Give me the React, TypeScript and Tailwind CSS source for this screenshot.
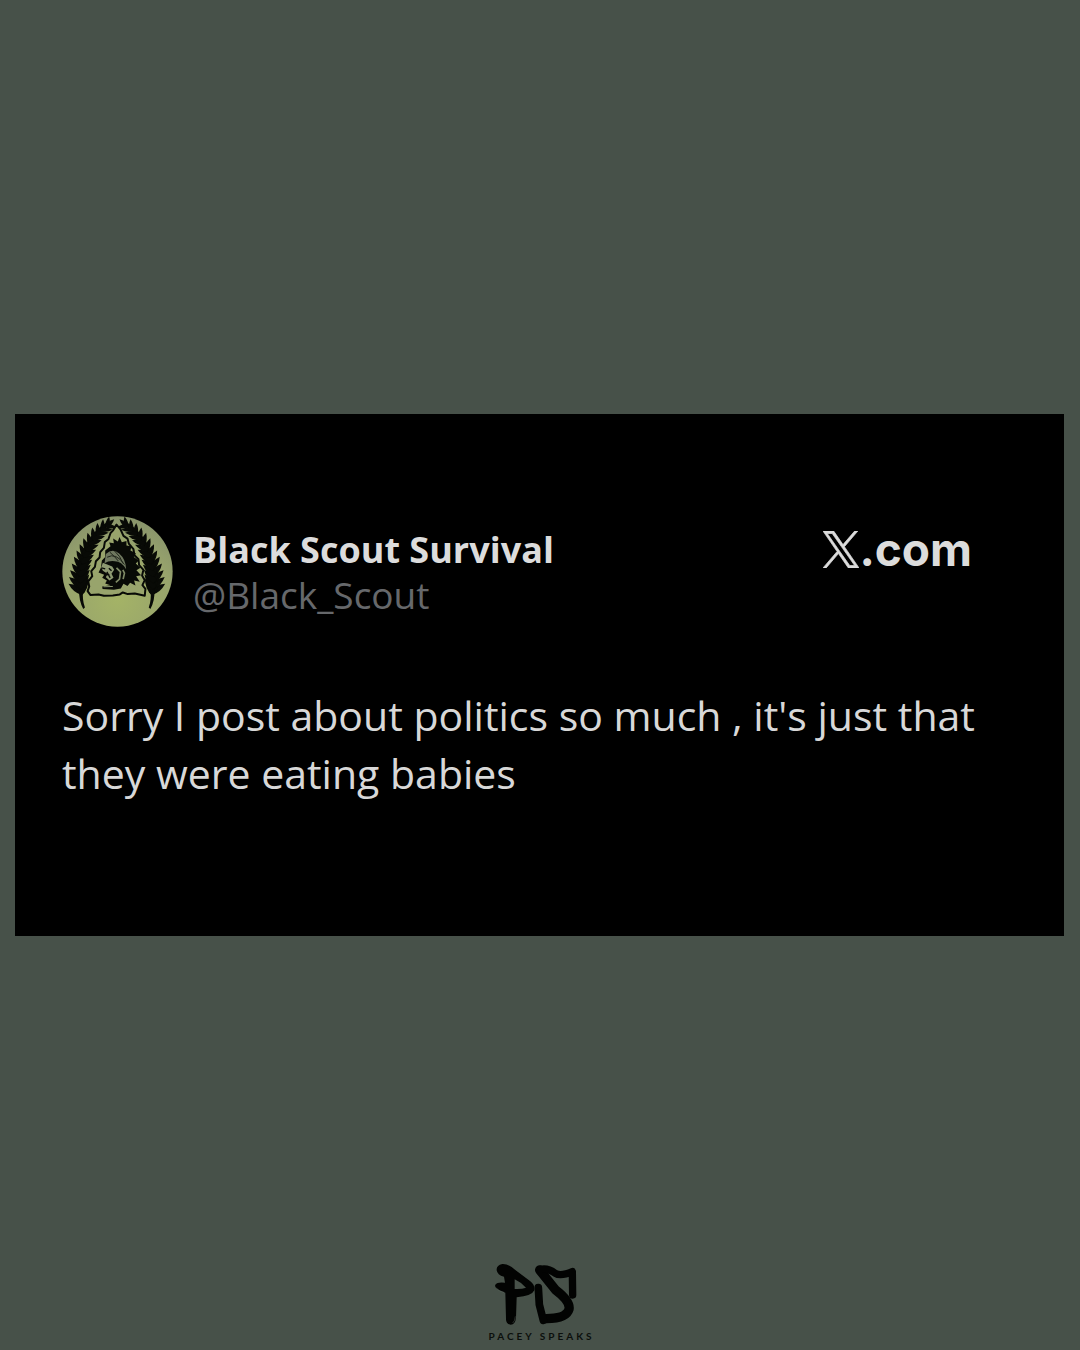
const LEAF_COUNT = 13;

/* Leaves follow a cubic stem from the base of the feather to its tip. */
const LEAVES = Array.from({ length: LEAF_COUNT }, (_, i) => {
  const t = i / (LEAF_COUNT - 1);
  const u = 1 - t;
  const x = u * u * u * 86 + 3 * u * u * t * 72 + 3 * u * t * t * 104 + t * t * t * 164;
  const y = u * u * u * 256 + 3 * u * u * t * 190 + 3 * u * t * t * 96 + t * t * t * 58;
  const dx = 3 * u * u * -14 + 6 * u * t * 32 + 3 * t * t * 60;
  const dy = 3 * u * u * -66 + 6 * u * t * -94 + 3 * t * t * -38;
  return { x, y, angle: (Math.atan2(dy, dx) * 180) / Math.PI, size: 1.08 - 0.38 * t };
});

const LEAF = "M-6 -7 Q18 -14 42 0 Q18 13 -6 7 Z";

function Feather() {
  return (
    <g fill="#080a06">
      {LEAVES.map(({ x, y, angle, size }) => (
        <g key={y} transform={`translate(${x} ${y}) rotate(${angle}) scale(${size})`}>
          <path d={LEAF} transform="rotate(-46)" />
          <path d={LEAF} transform="rotate(-12)" />
          <path d={LEAF} transform="rotate(42)" />
        </g>
      ))}
      <path d="M80 250 Q78 282 92 308 L97 303 Q88 280 92 250 Z" />
    </g>
  );
}

function ScoutAvatar() {
  return (
    <svg viewBox="28 28 334 334" role="img" aria-label="Black Scout Survival avatar" className="size-[111px] shrink-0">
      <defs>
        <radialGradient id="badge" cx="0.5" cy="0.75" r="0.8">
          <stop offset="0" stopColor="#a4b366" />
          <stop offset="0.6" stopColor="#98a46c" />
          <stop offset="1" stopColor="#85906b" />
        </radialGradient>
      </defs>
      <circle cx="195" cy="195" r="166" fill="url(#badge)" />
      <Feather />
      <g transform="translate(386 0) scale(-1 1)">
        <Feather />
      </g>
      <path
        d="M192 54 L181 72 L174 79 L168 97 L157 106 L154 124 L143 137 L141 153 L130 164 L127 181 L116 194 L119 209 L107 225 L110 240 L105 254 L114 266 L138 264 L154 268 L181 267 L202 264 L211 258 L226 263 L247 261 L277 268 L279 247 L270 236 L277 221 L269 207 L273 190 L260 176 L258 158 L246 146 L243 128 L229 111 L225 96 L213 88 L204 68 Z"
        fill="#98a46c"
        stroke="#080a06"
        strokeWidth="6"
        strokeLinejoin="round"
      />
      <path
        d="M158 132 L174 119 L170 108 L184 110 L182 96 L196 105 L201 91 L208 107 L222 103 L222 117 L237 119 L234 132 L250 140 L244 151 L259 162 L250 171 L264 184 L252 191 L266 206 L251 209 L262 226 L245 222 L249 237 L233 229 L225 239 L213 232 L205 246 L184 250 L150 248 L149 240 L174 236 L158 231 L163 222 L149 214 L155 205 L138 198 L145 184 L148 162 L158 151 Z"
        fill="#080a06"
      />
      <path d="M160 142 Q181 123 200 141 Q220 158 221 188 Q207 164 187 164 Q168 162 156 170 Z" fill="#6f785f" />
      <path d="M164 152 Q190 137 216 174 M172 137 Q187 150 198 164 M186 133 Q203 148 212 171" fill="none" stroke="#20251a" strokeWidth="3" />
      <path d="M151 169 L164 174 L179 180 L185 190 L177 202 L183 214 L171 222 L160 212 L165 202 L151 193 L146 182 Z" fill="#8d9971" />
      <path d="M147 184 L158 187 M156 204 L171 205 M169 185 L177 193 M163 196 L173 214" stroke="#080a06" strokeWidth="4" />
      <path d="M192 184 L204 196 L201 218 L190 228 M211 190 L216 200 L212 218" fill="none" stroke="#7f8a66" strokeWidth="5" />
      <path d="M153 241 L181 240" stroke="#8d9971" strokeWidth="3" />
    </svg>
  );
}

function XLogo() {
  return (
    <svg viewBox="0 0 1200 1227" aria-hidden="true" className="h-[37px] w-9" fill="#dcdcdc" stroke="#dcdcdc" strokeWidth="24">
      <path d="M714.163 519.284L1160.89 0H1055.03L667.137 450.887L357.328 0H0L468.492 681.821L0 1226.37H105.866L515.491 750.218L842.672 1226.37H1200L714.137 519.284H714.163ZM569.165 687.828L521.697 619.934L144.011 79.6944H306.615L611.412 515.685L658.88 583.579L1055.08 1150.3H892.476L569.165 687.854V687.828Z" />
    </svg>
  );
}

function Monogram() {
  return (
    <svg viewBox="42 24 252 189" role="img" aria-label="PS" className="mr-2 mb-0.5 h-[63px] w-[84px]">
      <path
        fill="#020302"
        fillRule="evenodd"
        d="M50 44 Q49 31 67 27 Q86 26 106 45 L151 79 Q166 91 163 106 Q156 123 110 127 L108 188 Q106 208 92 209 Q77 208 78 190 L76 113 L61 107 Q42 99 46 89 Q52 80 75 83 L72 65 Q51 61 50 44 Z M104 73 L104 102 Q126 103 138 98 Q125 83 104 73 Z"
      />
      <g fill="none" stroke="#020302" strokeLinecap="round" strokeLinejoin="round">
        <path d="M179 45 L226 104 Q272 139 267 163 Q259 191 199 191" strokeWidth="28" />
        <path d="M182 43 Q203 38 226 55 Q242 65 277 50 L278 120" strokeWidth="22" />
        <path d="M175 98 L178 149 L190 196" strokeWidth="23" />
      </g>
      <path d="M49 99 Q57 109 72 112 M98 204 Q105 198 106 184" fill="none" stroke="#79877d" strokeWidth="1" />
    </svg>
  );
}

export default function App() {
  return (
    <div className="grid min-h-screen grid-rows-[1fr_auto_1fr] bg-[#475149] pr-4 pl-[15px] font-['Open_Sans',sans-serif]">
      <main className="row-start-2 bg-black pt-[102px] pr-12 pb-[134px] pl-[47px]">
        <article>
          <header className="flex items-start justify-between pr-11">
            <div className="flex items-center gap-5">
              <ScoutAvatar />
              <div>
                <h1 className="text-[36px] leading-[46px] font-bold text-[#dcdcdc]">Black Scout Survival</h1>
                <p className="text-[37px] leading-[44px] text-[#66686b]">@Black_Scout</p>
              </div>
            </div>
            <a href="https://x.com" aria-label="X.com" className="mt-2 flex items-center text-[#dcdcdc]">
              <XLogo />
              <span className="font-['Inter',sans-serif] text-[46px] leading-[50px] font-bold">.com</span>
            </a>
          </header>
          <p className="mt-[59px] text-[41px] leading-[58px] text-[#d8d8d8]">
            Sorry I post about politics so much , it's just that they were eating babies
          </p>
        </article>
      </main>
      <footer className="row-start-3 flex flex-col items-center self-end pb-1.5">
        <Monogram />
        <p className="pl-1 font-['Lato',sans-serif] text-[10px] leading-4 font-bold tracking-[3px] text-[#0b0f0c]">PACEY SPEAKS</p>
      </footer>
    </div>
  );
}
